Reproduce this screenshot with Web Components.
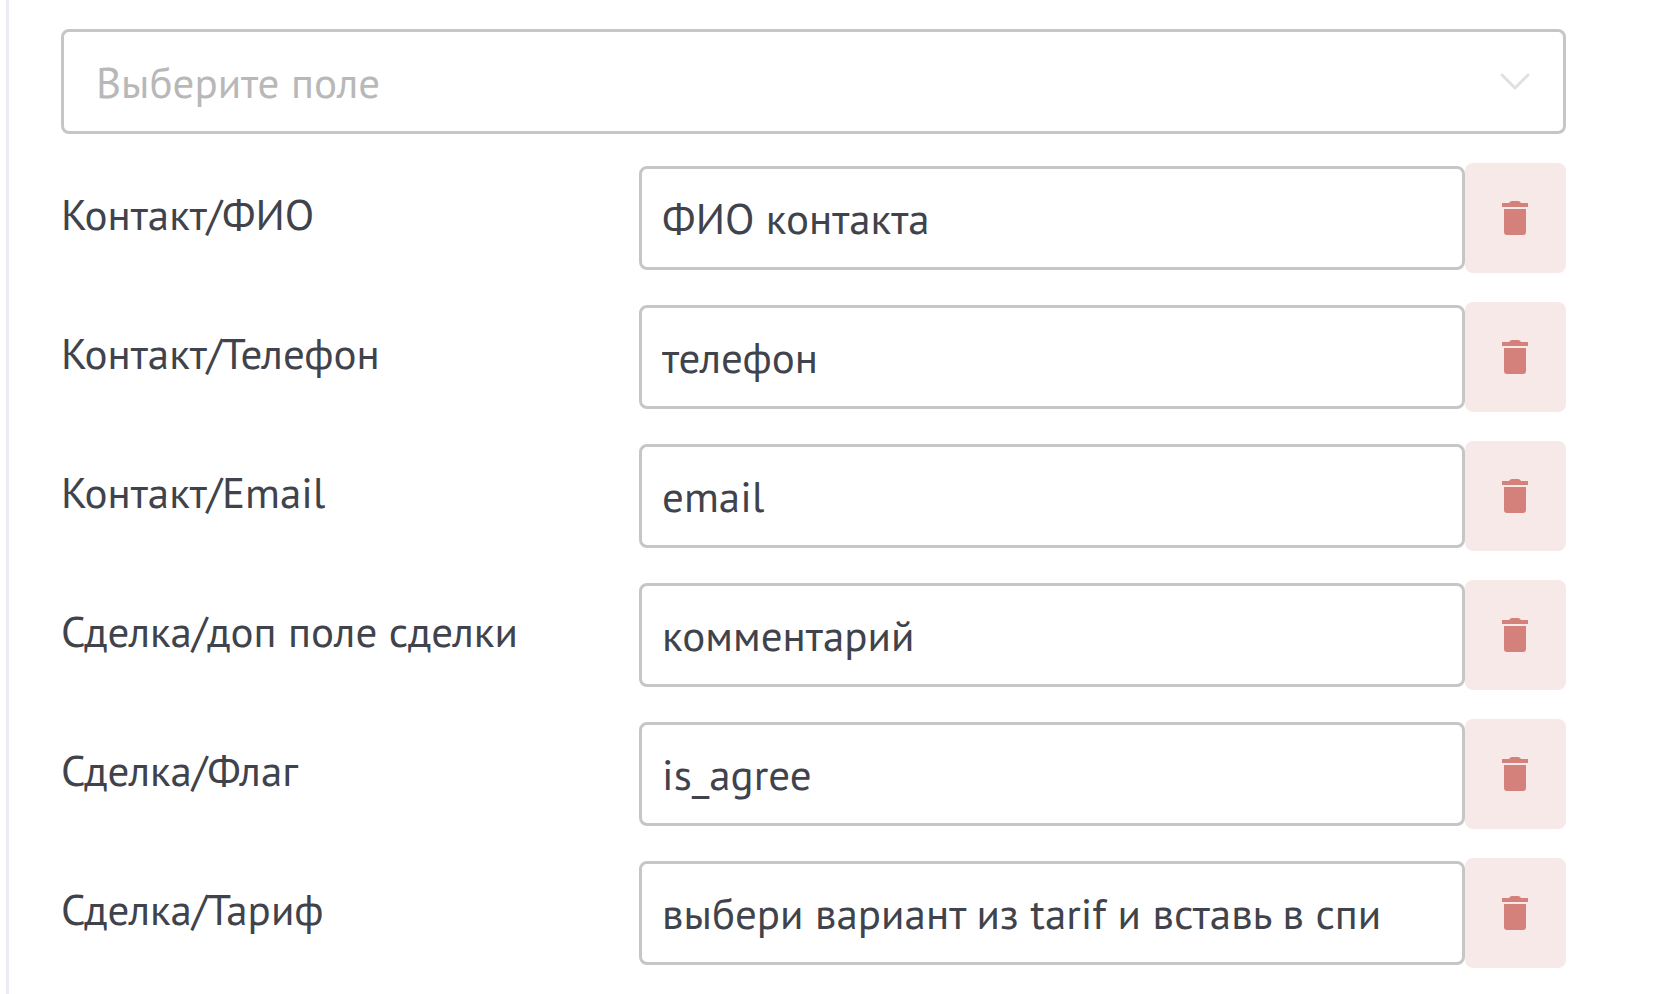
<!DOCTYPE html>
<html lang="ru">
<head>
<meta charset="utf-8">
<meta name="viewport" content="width=device-width, initial-scale=1">
<title>Настройка полей</title>
<style>
    body {
        margin: 0;
        background: #fff;
        color: #40434b;
        font-family: "PT Sans", "Noto Sans", sans-serif;
        font-size: 43px;
        line-height: 56px;
    }
</style>
</head>
<body>
<field-mapping>
    <field-select slot="picker" placeholder="Выберите поле"></field-select>
    <field-row value="ФИО контакта">Контакт/ФИО</field-row>
    <field-row value="телефон">Контакт/Телефон</field-row>
    <field-row value="email">Контакт/Email</field-row>
    <field-row value="комментарий">Сделка/доп поле сделки</field-row>
    <field-row value="is_agree">Сделка/Флаг</field-row>
    <field-row value="выбери вариант из tarif и вставь в список">Сделка/Тариф</field-row>
</field-mapping>
<script>
function mkTmplt(innerHtml) {
    const tmplt = document.createElement("template");
    tmplt.innerHTML = innerHtml;
    return tmplt;
}

// Panel with the field picker on top and the mapped fields below
class FieldMapping extends HTMLElement {
    constructor() {
        super();
        const shadow = this.attachShadow({ mode: "open" });
        shadow.append(FieldMapping._tmplt.content.cloneNode(true));
    }
    connectedCallback() {
        this.addEventListener("row-remove", e => e.target.remove());
    }
}
FieldMapping._tmplt = mkTmplt(`
        <slot name="picker"></slot>
        <div id="rows"><slot></slot></div>
        <style>
            :host {
                display: block;
                box-sizing: border-box;
                min-height: 100vh;
                margin-left: 6px;
                padding: 29px 108px 24px 52px;
                border-left: 3px solid #ebecef;
            }
            #rows {
                display: grid;
                gap: 29px;
                margin-top: 29px;
            }
        </style>
    `);

class FieldSelect extends HTMLElement {
    constructor() {
        super();
        const shadow = this.attachShadow({ mode: "open" });
        shadow.append(FieldSelect._tmplt.content.cloneNode(true));
        this.select = shadow.querySelector("select");
        this.option = shadow.querySelector("option");
    }
    connectedCallback() {
        const text = this.getAttribute("placeholder");
        this.option.textContent = text;
        this.select.setAttribute("aria-label", text);
    }
}
FieldSelect._tmplt = mkTmplt(`
        <select><option value=""></option></select>
        <svg width="30" height="18" viewBox="0 0 30 18" aria-hidden="true">
            <path d="M2 2l13 13L28 2" fill="none" stroke="#dfe0e4" stroke-width="3" stroke-linecap="round" stroke-linejoin="round"/>
        </svg>
        <style>
            :host {
                display: grid;
                align-items: center;
            }
            select, svg {
                grid-area: 1 / 1;
            }
            select {
                appearance: none;
                box-sizing: border-box;
                width: 100%;
                height: 105px;
                padding: 0 80px 0 32px;
                border: 3px solid #c6c6c6;
                border-radius: 8px;
                background: #fff;
                color: #b8b8b8;
                font: inherit;
            }
            svg {
                justify-self: end;
                margin-right: 36px;
                pointer-events: none;
            }
        </style>
    `);

class FieldRow extends HTMLElement {
    constructor() {
        super();
        const shadow = this.attachShadow({ mode: "open" });
        shadow.append(FieldRow._tmplt.content.cloneNode(true));
        this.input = shadow.querySelector("input");
        this.btRemove = shadow.querySelector("button");
    }
    connectedCallback() {
        this.input.value = this.getAttribute("value") || "";
        this.btRemove.addEventListener("click", () => {
            this.dispatchEvent(new CustomEvent("row-remove", { bubbles: true }));
        });
    }
}
FieldRow._tmplt = mkTmplt(`
        <label for="value"><slot></slot></label>
        <input id="value" type="text">
        <button type="button" aria-label="Удалить">
            <svg width="26" height="34" viewBox="0 0 26 34" aria-hidden="true">
                <path fill="#d5817b" d="M0 2h7q1-2 3-2h6q2 0 3 2h7v4H0zM2 8h22v23a3 3 0 0 1-3 3H5a3 3 0 0 1-3-3z"/>
            </svg>
        </button>
        <style>
            :host {
                display: grid;
                grid-template-columns: 7fr 10fr 101px;
                align-items: center;
            }
            label {
                padding-bottom: 8px;
            }
            input {
                box-sizing: border-box;
                width: 100%;
                min-width: 0;
                height: 104px;
                padding: 0 80px 0 20px;
                border: 3px solid #c6c6c6;
                border-radius: 8px;
                background: #fff;
                color: inherit;
                font: inherit;
            }
            button {
                display: grid;
                place-items: center;
                height: 110px;
                padding: 0;
                border: 0;
                border-radius: 8px;
                background: #f7e9e8;
                cursor: pointer;
            }
        </style>
    `);

customElements.define("field-mapping", FieldMapping);
customElements.define("field-select", FieldSelect);
customElements.define("field-row", FieldRow);
</script>
</body>
</html>
